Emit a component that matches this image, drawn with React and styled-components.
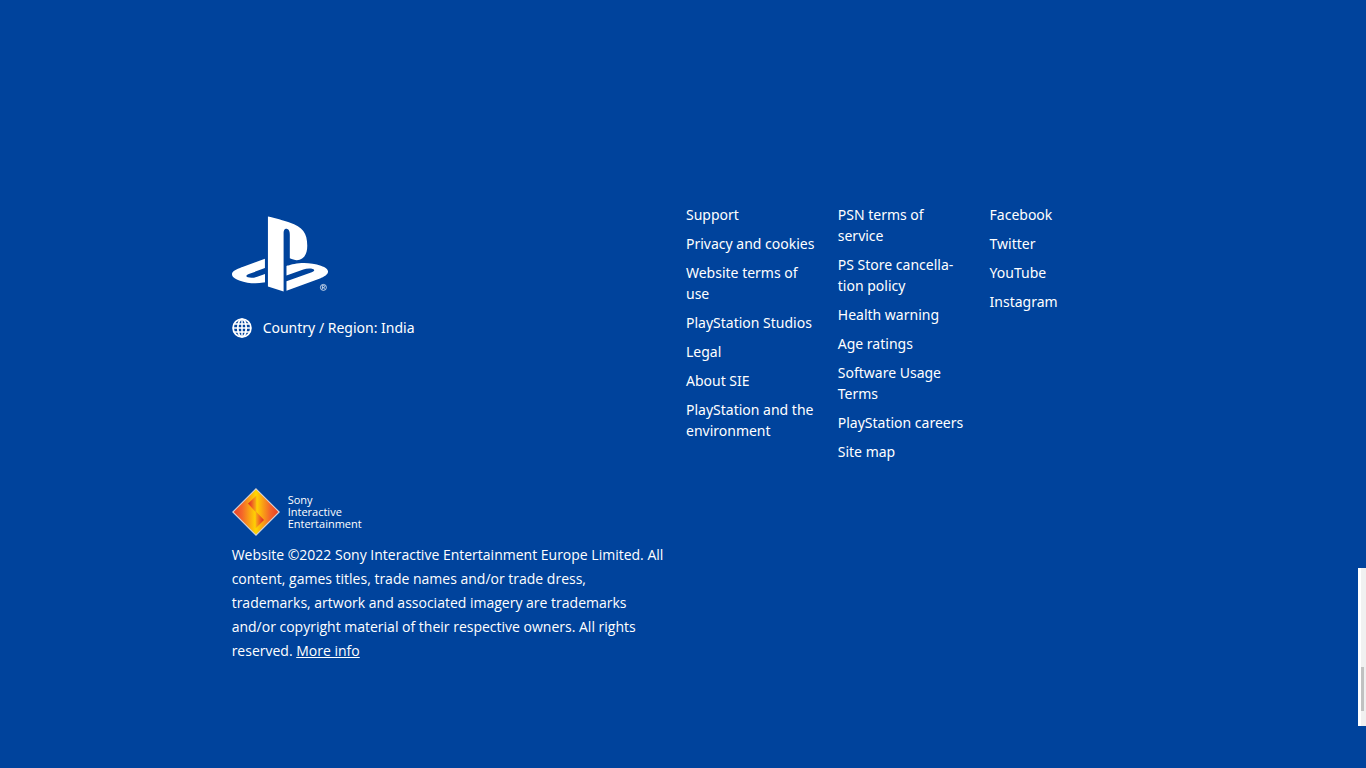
import React from "react";
import styled, { createGlobalStyle } from "styled-components";

const GlobalStyle = createGlobalStyle`
  *, *::before, *::after { box-sizing: border-box; }
  body {
    margin: 0;
    background: #00439c;
    color: #fff;
    font-family: "Noto Sans", "Open Sans", sans-serif;
    font-size: 14px;
  }
`;

const Footer = styled.footer`
  display: grid;
  grid-template-columns: minmax(0, 1fr) minmax(0, 1fr);
  row-gap: 26px;
  align-content: start;
  width: 66.67%;
  min-height: 100vh;
  margin: 0 auto;
  padding: 204px 0 40px;
`;

const Brand = styled.div`
  display: flex;
  flex-direction: column;
  align-items: flex-start;
  gap: 24px;
  padding: 12px 0 0 4px;
`;

const HomeLink = styled.a`
  display: block;
  color: #fff;
`;

const Logo = styled.svg`
  display: block;
`;

const RegionLink = styled.a`
  display: flex;
  align-items: center;
  gap: 11px;
  line-height: 21px;
  color: #fff;
  text-decoration: none;
`;

const LinkColumns = styled.nav`
  display: grid;
  grid-template-columns: repeat(3, minmax(0, 1fr));
`;

const LinkList = styled.ul`
  display: flex;
  flex-direction: column;
  gap: 8px;
  margin: 0;
  padding: 0 18px 0 3px;
  list-style: none;
  line-height: 21px;
`;

const FooterLink = styled.a`
  color: #fff;
  text-decoration: none;
  hyphens: manual;
`;

const Legal = styled.section`
  display: flex;
  flex-direction: column;
  gap: 7px;
  padding: 0 18px 0 4px;
  font-family: "Open Sans", "Noto Sans", sans-serif;
`;

const Company = styled.div`
  display: flex;
  align-items: center;
  gap: 8px;
`;

const CompanyName = styled.span`
  font-size: 11px;
  line-height: 12px;
`;

const Copyright = styled.p`
  margin: 0;
  line-height: 24px;
`;

const MoreInfo = styled.a`
  color: #fff;
  text-decoration: underline;
`;

const ScrollTrack = styled.div`
  position: fixed;
  right: 0;
  bottom: 42px;
  width: 8px;
  height: 158px;
  padding-top: 99px;
  background: #f0f0f0;
  border-left: 3px solid #fff;
`;

const ScrollThumb = styled.div`
  width: 3px;
  height: 44px;
  background: #c1c1c1;
`;

const columns = [
  {
    label: "Support and company",
    links: [
      "Support",
      "Privacy and cookies",
      "Website terms of use",
      "PlayStation Studios",
      "Legal",
      "About SIE",
      "PlayStation and the environment",
    ],
  },
  {
    label: "Policies",
    links: [
      "PSN terms of service",
      "PS Store cancella\u00ADtion policy",
      "Health warning",
      "Age ratings",
      "Software Usage Terms",
      "PlayStation careers",
      "Site map",
    ],
  },
  { label: "Social", links: ["Facebook", "Twitter", "YouTube", "Instagram"] },
];

function PlayStationLogo() {
  return (
    <Logo width="96" height="77" viewBox="0 2.5 24 19.25" fill="currentColor" aria-hidden="true">
      <path d="M8.985 2.596v17.548l3.915 1.261V6.688c0-.69.304-1.151.794-.991.636.181.76.814.76 1.505v5.876c2.441 1.193 4.362-.002 4.362-3.153 0-3.237-1.126-4.675-4.438-5.827-1.307-.448-3.728-1.186-5.391-1.502z" />
      <path d="M13.621 18.838l6.316-2.275c.715-.258.826-.625.246-.818-.586-.192-1.637-.139-2.357.123l-4.205 1.499v-2.385l.24-.085s1.201-.42 2.913-.615c1.696-.18 3.785.029 5.437.661 1.848.601 2.041 1.472 1.576 2.072s-1.622 1.036-1.622 1.036l-8.544 3.107z" />
      <path d="M1.808 18.6c-1.9-.545-2.214-1.668-1.352-2.321.801-.585 2.159-1.051 2.159-1.051l5.616-2.013v2.313L4.206 17c-.705.271-.825.632-.239.826.586.195 1.637.15 2.343-.12L8.248 17v2.074c-.121.029-.256.044-.391.073-1.938.33-3.995.196-6.049-.547z" />
      <circle cx="22.85" cy="20.35" r=".75" fill="none" stroke="currentColor" strokeWidth=".18" />
      <path d="M22.6 20.8v-.9h.32a.25.25 0 0 1 0 .5h-.32m.34 0l.2.4" fill="none" stroke="currentColor" strokeWidth=".17" />
    </Logo>
  );
}

function GlobeIcon() {
  return (
    <svg width="20" height="20" viewBox="0 0 20 20" fill="none" stroke="currentColor" strokeWidth="1.8" aria-hidden="true">
      <circle cx="10" cy="10" r="8.9" />
      <ellipse cx="10" cy="10" rx="4.2" ry="8.9" />
      <path d="M10 1v18M1 10h18M2.5 6h15M2.5 14h15" strokeWidth="1.5" />
    </svg>
  );
}

function CompanyMark() {
  return (
    <svg width="48" height="48" viewBox="0 0 48 48" aria-hidden="true">
      <defs>
        <linearGradient id="markOuter">
          <stop offset="0" stopColor="#ea3d25" />
          <stop offset=".2" stopColor="#f4662a" />
          <stop offset=".5" stopColor="#ffd800" />
          <stop offset=".8" stopColor="#f4662a" />
          <stop offset="1" stopColor="#ea3d25" />
        </linearGradient>
        <linearGradient id="markUpper">
          <stop offset="0" stopColor="#e02a20" />
          <stop offset=".4" stopColor="#ec5424" />
          <stop offset="1" stopColor="#fbb514" />
        </linearGradient>
        <linearGradient id="markLower">
          <stop offset="0" stopColor="#fbb514" />
          <stop offset=".6" stopColor="#ec5424" />
          <stop offset="1" stopColor="#e02a20" />
        </linearGradient>
      </defs>
      <path d="M24 .8L47.2 24 24 47.2.8 24z" fill="url(#markOuter)" stroke="#d9d5d8" strokeWidth="1.1" />
      <path d="M24.5 7.5L16 15.5l8.5 9.5z" fill="url(#markUpper)" />
      <path d="M23.5 23l8.5 9-8.5 8.5z" fill="url(#markLower)" />
    </svg>
  );
}

export default function App() {
  return (
    <>
      <GlobalStyle />
      <Footer>
        <Brand>
          <HomeLink href="#home" aria-label="PlayStation">
            <PlayStationLogo />
          </HomeLink>
          <RegionLink href="#region">
            <GlobeIcon />
            Country / Region: India
          </RegionLink>
        </Brand>
        <LinkColumns aria-label="Footer">
          {columns.map(({ label, links }) => (
            <LinkList key={label} aria-label={label}>
              {links.map((text) => (
                <li key={text}>
                  <FooterLink href="#">{text}</FooterLink>
                </li>
              ))}
            </LinkList>
          ))}
        </LinkColumns>
        <Legal>
          <Company>
            <CompanyMark />
            <CompanyName>
              Sony
              <br />
              Interactive
              <br />
              Entertainment
            </CompanyName>
          </Company>
          <Copyright>
            Website ©2022 Sony Interactive Entertainment Europe Limited. All content, games titles,
            trade names and/or trade dress, trademarks, artwork and associated imagery are
            trademarks and/or copyright material of their respective owners. All rights reserved.{" "}
            <MoreInfo href="#more-info">More info</MoreInfo>
          </Copyright>
        </Legal>
      </Footer>
      <ScrollTrack aria-hidden="true">
        <ScrollThumb />
      </ScrollTrack>
    </>
  );
}
